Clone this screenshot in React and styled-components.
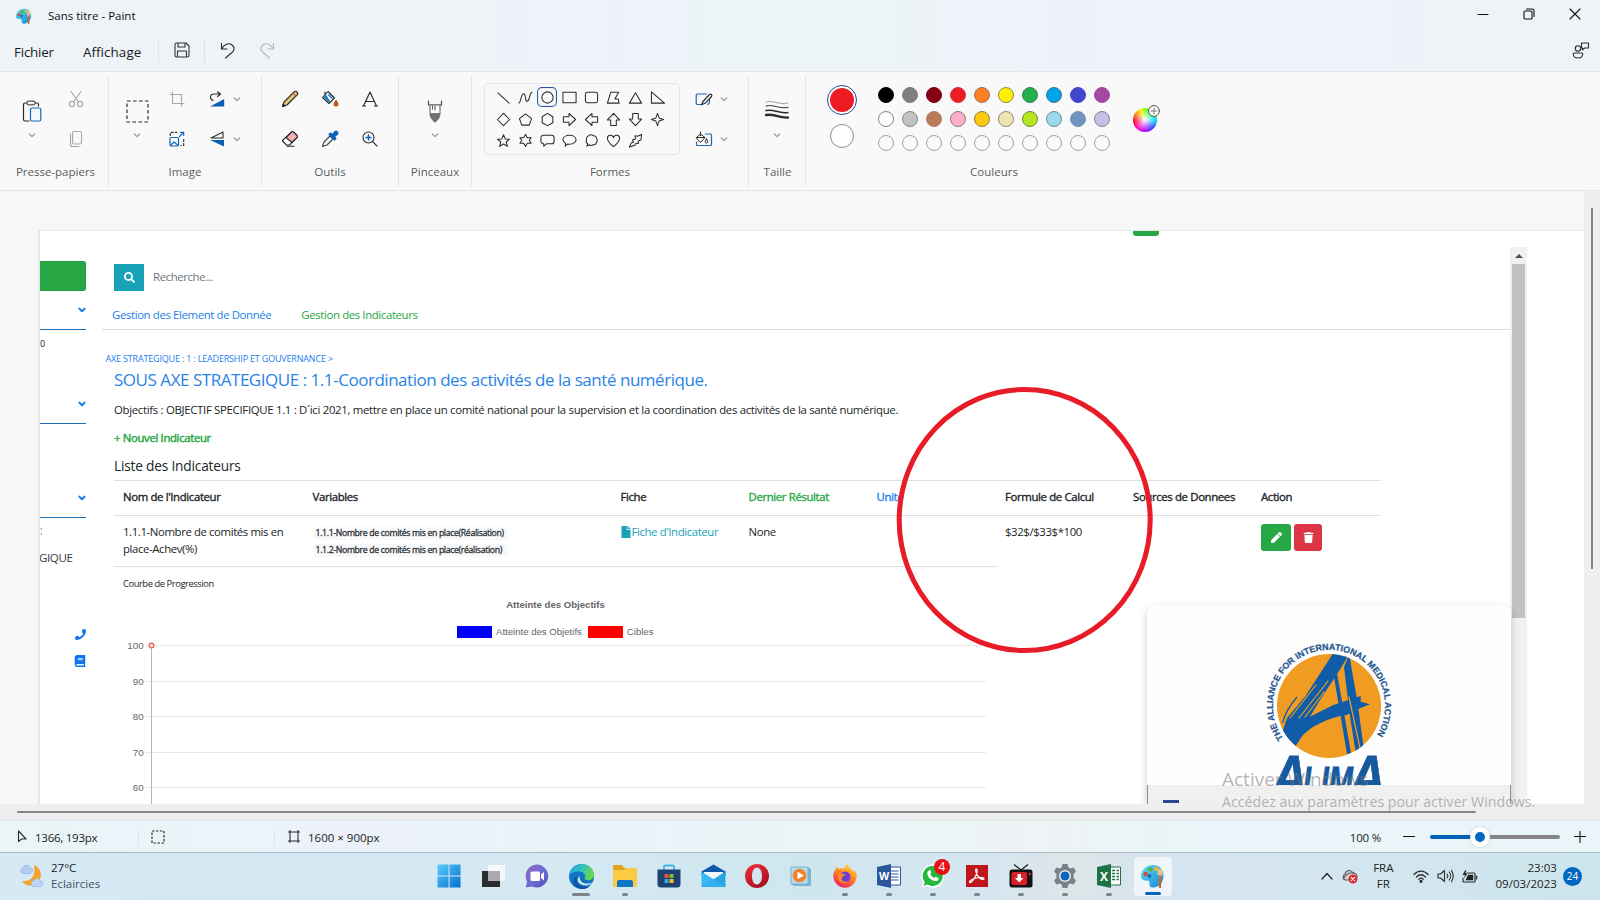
import React from 'react';
import styled, { createGlobalStyle } from 'styled-components';
import { FaSearch, FaPhone, FaBook, FaFile, FaPen, FaTrash } from 'react-icons/fa';

const Global = createGlobalStyle`
  * { box-sizing: border-box; }
  body { margin: 0; overflow: hidden; background: #f7f7f7; }
  svg { display: block; flex: none; }
`;

/* ---------- window shell ---------- */
const Window = styled.div`
  position: relative;
  width: 1600px;
  height: 900px;
  overflow: hidden;
  display: flex;
  flex-direction: column;
  font-family: "Open Sans", "Noto Sans", sans-serif;
  font-size: 11.5px;
  color: #1b1b1b;
  white-space: nowrap;
`;
const Header = styled.header`
  height: 72px;
  flex: none;
  border-bottom: 1px solid #e4e7ea;
  background: linear-gradient(90deg, #edf3f7 0%, #edf3f7 28%, #eef2fb 36%, #ecf4f7 46%, #ecf4f7 52%, #eef2fb 72%, #eef2fb 84%, #edf3f7 92%);
`;
const TitleBar = styled.div`
  height: 31px;
  display: flex;
  align-items: center;
  padding: 0 19px 0 16px;
`;
const Title = styled.span`
  margin: -1px 0 0 16px;
  flex: 1;
  color: #111;
`;
const WindowControls = styled.div`
  display: flex;
  align-items: center;
  gap: 34px;
  padding-bottom: 3px;
`;
const MenuBar = styled.div`
  height: 40px;
  display: flex;
  align-items: center;
  padding: 1px 10px 0 14px;
`;
const MenuItem = styled.span`
  font-size: 13.4px;
  letter-spacing: ${(p) => p.$track || '0.08px'};
  margin-right: ${(p) => p.$gap}px;
`;
const MenuDivider = styled.i`
  width: 1px;
  height: 23px;
  background: #dde2e6;
`;
const MenuTool = styled.span`
  display: flex;
  justify-content: center;
  width: ${(p) => p.$w}px;
  padding-bottom: 3px;
`;
const Feedback = styled.span`
  margin-left: auto;
  padding-bottom: 3px;
`;

/* ---------- ribbon ---------- */
const Ribbon = styled.div`
  height: 119px;
  flex: none;
  display: flex;
  padding: 4px 0;
  background: #f9f9f9;
  border-bottom: 1px solid #e6e6e6;
`;
const Group = styled.section`
  width: ${(p) => p.$w}px;
  border-right: ${(p) => (p.$last ? 0 : '1px solid #e5e5e5')};
  display: flex;
  flex-direction: column;
  padding-top: 3px;
`;
const GroupBody = styled.div`
  height: 80px;
  display: flex;
  justify-content: ${(p) => (p.$center ? 'center' : 'flex-start')};
  padding-left: ${(p) => p.$pad || 0}px;
`;
const GroupLabel = styled.div`
  height: 26px;
  line-height: 26px;
  text-align: center;
  padding-left: ${(p) => p.$pad || 0}px;
  color: #5c5c5c;
`;
const BigTool = styled.div`
  width: ${(p) => p.$w}px;
  flex: none;
  display: flex;
  flex-direction: column;
  align-items: center;
  justify-content: space-between;
  padding: 21px 0 21px;
`;
const ToolGrid = styled.div`
  display: grid;
  grid-template-columns: ${(p) => p.$cols};
  grid-template-rows: 40px 40px;
  align-items: center;
  justify-items: center;
`;
const SplitTool = styled.div`
  display: flex;
  align-items: center;
  gap: ${(p) => p.$gap}px;
`;
const ShapeBox = styled.div`
  width: 196px;
  height: 72px;
  margin: 4px 12px 0 0;
  border: 1px solid #e6e6e6;
  border-radius: 4px;
  padding: 2px 7px;
  display: grid;
  grid-template-columns: repeat(8, 22px);
  grid-template-rows: 22px 22px 21px;
`;
const ShapeCell = styled.span`
  display: flex;
  align-items: center;
  justify-content: center;
  border-radius: 5px;
  box-shadow: ${(p) => (p.$on ? 'inset 0 0 0 1px #2b559f, inset 0 0 0 2px #e8eef8' : 'none')};
  margin: 1px;
`;
const ActiveColors = styled.div`
  display: flex;
  flex-direction: column;
  align-items: center;
  gap: 9px;
  padding-top: 6px;
  margin-right: 21px;
`;
const Primary = styled.span`
  width: 30px;
  height: 30px;
  border-radius: 50%;
  border: 1px solid #1f4a91;
  padding: 2px;
  background: #fff;
  &::after {
    content: '';
    display: block;
    width: 24px;
    height: 24px;
    border-radius: 50%;
    background: #ed1c24;
  }
`;
const Secondary = styled.span`
  width: 24px;
  height: 24px;
  border-radius: 50%;
  border: 1px solid #8a8a8a;
  background: #fff;
`;
const Palette = styled.div`
  display: grid;
  grid-template-columns: repeat(10, 16px);
  grid-auto-rows: 16px;
  gap: 8px;
  padding-top: 8px;
  margin-right: 23px;
`;
const Swatch = styled.span`
  border-radius: 50%;
  background: ${(p) => p.$c};
  border: 1px solid ${(p) => p.$ring};
`;
const WheelWrap = styled.div`
  position: relative;
  width: 24px;
  height: 24px;
  margin-top: 29px;
  border-radius: 50%;
  background: radial-gradient(circle, #fff 0%, rgba(255, 255, 255, 0.6) 25%, transparent 68%),
    conic-gradient(#7dff00, #00ff6a 50deg, #00d5ff 90deg, #2a4bff 130deg, #a000ff 175deg, #ff00d0 220deg, #ff0030 265deg, #ff8a00 305deg, #ffee00 335deg, #7dff00);
`;
const WheelPlus = styled.span`
  position: absolute;
  left: 15px;
  top: -3px;
`;

/* ---------- work area ---------- */
const Workspace = styled.div`
  height: 613px;
  flex: none;
  display: flex;
  background: #f7f7f7;
`;
const CanvasHolder = styled.div`
  width: 1584px;
  padding: 39px 0 0 38px;
`;
const Canvas = styled.div`
  position: relative;
  height: 574px;
  width: 1546px;
  border-left: 2px solid #e6e6e6;
  border-top: 1px solid #e8e8e8;
  background: #fff;
  overflow: hidden;
  color: #212529;
`;
const VerticalTrack = styled.div`
  flex: 1;
  background: #efefef;
  padding: 17px 0 0 7px;
`;
const VerticalThumb = styled.div`
  width: 2px;
  height: 361px;
  background: #868686;
`;
const HorizontalTrack = styled.div`
  height: 16px;
  flex: none;
  background: #eee;
  padding: 7px 0 0 17px;
`;
const HorizontalThumb = styled.div`
  width: 1459px;
  height: 2px;
  border-radius: 1px;
  background: #868686;
`;

/* ---------- web page on the canvas ---------- */
const TopStrip = styled.div`
  height: 16px;
  padding-left: 1093px;
`;
const GreenStub = styled.div`
  width: 26px;
  height: 5px;
  background: #28a745;
  border-radius: 0 0 3px 3px;
`;
const PageRow = styled.div`
  display: flex;
  height: 557px;
`;
const SideNav = styled.aside`
  width: 46px;
  margin-right: 16px;
  padding-top: 14px;
  overflow: hidden;
`;
const SideButton = styled.div`
  height: 30px;
  background: #28a745;
  border: 1px solid #1f9a3c;
  border-left: 0;
  border-radius: 0 3px 3px 0;
`;
const SideSection = styled.div`
  height: ${(p) => p.$h}px;
  border-bottom: 1px solid #1b6fb8;
  display: flex;
  flex-direction: column;
  justify-content: space-between;
  padding-bottom: 16px;
`;
const SideText = styled.div`
  font-size: 9px;
  line-height: 12px;
  padding-top: 8px;
`;
const SideChevron = styled.span`
  align-self: flex-end;
  margin-top: auto;
`;
const SideFoot = styled.div`
  display: flex;
  flex-direction: column;
  color: #0f74f0;
`;
const SideCut = styled.div`
  height: 26px;
  width: 2px;
  overflow: hidden;
  font-size: 12px;
  line-height: 26px;
  color: #777;
`;
const SideWord = styled.div`
  height: 28px;
  line-height: 28px;
  font-size: 11.6px;
  letter-spacing: -0.4px;
  color: #333a40;
  margin-left: -1px;
`;
const SideIcon = styled.span`
  align-self: flex-end;
  margin-top: ${(p) => p.$top}px;
`;
const Main = styled.main`
  width: 1408px;
`;
const SearchBar = styled.div`
  display: flex;
  align-items: center;
  padding: 17px 0 0 12px;
  font-size: 11.4px;
  letter-spacing: -0.4px;
  line-height: 1;
  color: #6c757d;
`;
const SearchHint = styled.span`
  padding-bottom: 2px;
`;
const SearchButton = styled.span`
  width: 30px;
  height: 27px;
  margin-right: 9px;
  background: #17a2b8;
  color: #fff;
  display: flex;
  align-items: center;
  justify-content: center;
`;
const Tabs = styled.nav`
  height: 39px;
  border-bottom: 1px solid #dcdfe2;
  display: flex;
  gap: 30px;
  padding: 0 0 0 10px;
  line-height: 48px;
  font-size: 11.4px;
`;
const Tab = styled.span`
  letter-spacing: -0.38px;
  color: ${(p) => (p.$active ? '#28a745' : '#1b80e8')};
`;
const Crumb = styled.div`
  padding: 22px 0 0 3.5px;
  font-size: 9px;
  line-height: 14px;
  letter-spacing: -0.18px;
  color: #1b7df0;
`;
const Section = styled.div`
  padding-left: 12px;
`;
const Heading = styled.h1`
  margin: 0;
  font-size: 17px;
  font-weight: 400;
  line-height: 28px;
  letter-spacing: -0.465px;
  color: #2a84e6;
`;
const Goal = styled.p`
  margin: 0;
  font-size: 11.4px;
  line-height: 32px;
  letter-spacing: -0.315px;
`;
const AddLink = styled.div`
  font-size: 11.4px;
  line-height: 24px;
  letter-spacing: -0.36px;
  color: #28a745;
  -webkit-text-stroke: 0.45px #28a745;
`;
const ListTitle = styled.h2`
  margin: 0;
  font-size: 13.7px;
  font-weight: 400;
  line-height: 32px;
  height: 30px;
  letter-spacing: -0.19px;
`;
const TableRow = styled.div`
  display: grid;
  grid-template-columns: 189.5px 308px 128px 128px 128.5px 128px 128px 128px;
  width: 1267px;
  height: ${(p) => p.$h}px;
  border-top: 1px solid #dcdfe3;
  font-size: 11.4px;
`;
const HeadCell = styled.div`
  padding-left: 9px;
  line-height: 32px;
  letter-spacing: -0.37px;
  color: ${(p) => p.$c || '#212529'};
  -webkit-text-stroke: 0.35px ${(p) => p.$c || '#212529'};
`;
const Cell = styled.div`
  padding: 7px 0 0 9px;
  line-height: 17px;
  letter-spacing: -0.4px;
  color: ${(p) => p.$c || '#212529'};
`;
const FileLink = styled.span`
  display: flex;
  align-items: center;
  margin-left: -1px;
`;
const Variables = styled.div`
  padding-top: 4px;
`;
const Variable = styled.div`
  width: 195px;
  height: 13px;
  margin-bottom: 4px;
  line-height: 12.5px;
  padding-left: 3px;
  border-radius: 3px;
  background: #f8f9fa;
  font-size: 8.7px;
  letter-spacing: -0.33px;
  color: #2c3136;
  -webkit-text-stroke: 0.3px #2c3136;
`;
const Buttons = styled.div`
  display: flex;
  gap: 3px;
  padding-top: 1px;
`;
const IconButton = styled.span`
  width: ${(p) => p.$w}px;
  height: 27px;
  border-radius: 3px;
  background: ${(p) => p.$bg};
  color: #fff;
  display: flex;
  align-items: center;
  justify-content: center;
`;
const ChartBlock = styled.div`
  width: 883px;
  border-top: 1px solid #dcdfe3;
  padding-top: 8px;
`;
const ChartCaption = styled.div`
  padding-left: 9px;
  font-size: 9.3px;
  line-height: 17px;
  letter-spacing: -0.4px;
`;
const ChartTitle = styled.div`
  font: 700 9.6px/24px "Liberation Sans", Arial, sans-serif;
  color: #666;
  text-align: center;
  padding-top: 1px;
`;
const Legend = styled.div`
  display: flex;
  justify-content: center;
  align-items: center;
  height: 21px;
  padding-top: 9px;
  font: 9.6px/12px "Liberation Sans", Arial, sans-serif;
  color: #666;
`;
const LegendKey = styled.i`
  width: 35px;
  height: 12px;
  margin: 0 3.5px 0 ${(p) => p.$ml || 0}px;
  background: ${(p) => p.$c};
`;
const PageScroll = styled.div`
  width: 17px;
  background: #f1f1f1;
  display: flex;
  flex-direction: column;
  align-items: center;
`;
const ScrollArrow = styled.i`
  margin: 7px 0 6px;
  border: 4px solid transparent;
  border-top: 0;
  border-bottom-color: #505050;
`;
const ScrollThumb = styled.i`
  width: 13px;
  height: 354px;
  background: #c1c1c1;
`;
const LogoCard = styled.div`
  position: absolute;
  left: 1107px;
  top: 374px;
  width: 364px;
  height: 199px;
  border-radius: 8px 8px 0 0;
  background: #fefefe;
  box-shadow: 0 3px 9px rgba(0, 0, 0, 0.2);
  display: flex;
  flex-direction: column;
`;
const CardFooter = styled.div`
  height: 19px;
  background: #f0f0f0;
  border: 1px solid #8e8e8e;
  border-width: 0 1px;
  padding: 15px 0 0 15px;
`;
const FooterMark = styled.i`
  display: block;
  width: 16px;
  height: 3px;
  background: #2a4a8c;
`;
const Annotation = styled.svg`
  position: absolute;
  left: 856px;
  top: 154px;
`;
const Watermark = styled.div`
  position: absolute;
  left: 1222px;
  top: 766px;
  color: rgba(120, 120, 120, 0.55);
  font-size: 14.2px;
  line-height: 20px;
`;
const WatermarkTitle = styled.div`
  font-size: 19px;
  line-height: 26px;
`;

/* ---------- status bar ---------- */
const StatusBar = styled.footer`
  height: 32px;
  flex: none;
  display: flex;
  align-items: center;
  border-top: 1px solid #e3e6e8;
  background: linear-gradient(90deg, #eaf5f7 0%, #edf2fa 22%, #ebf3f9 36%, #eaf5f7 52%, #eef3f5 65%, #e9f5f8 75%, #e9f5f9 100%);
`;
const StatusCell = styled.div`
  display: flex;
  align-items: center;
  width: ${(p) => p.$w}px;
  height: 16px;
  padding-left: ${(p) => p.$pad}px;
  gap: ${(p) => p.$gap || 0}px;
  letter-spacing: ${(p) => p.$track || 0}px;
  border-right: 1px solid ${(p) => (p.$line ? '#dbe4e7' : 'transparent')};
`;
const StatusText = styled.span`
  padding-top: 2px;
`;
const ZoomArea = styled.div`
  margin-left: auto;
  display: flex;
  align-items: center;
  padding: 1px 14px 0 0;
`;
const ZoomValue = styled.span`
  letter-spacing: -0.2px;
  margin-right: 22px;
  padding-top: 1px;
`;
const Track = styled.div`
  width: 130px;
  height: 4px;
  margin: 0 14px 0 15px;
  border-radius: 2px;
  display: flex;
  align-items: center;
  background: linear-gradient(90deg, #005fb8 50px, #868686 50px);
  padding-left: 40px;
`;
const Knob = styled.i`
  width: 20px;
  height: 20px;
  border-radius: 50%;
  border: 5px solid #fff;
  background: #0067c0;
  box-shadow: 0 0 1px 1px rgba(0, 0, 0, 0.08);
`;

/* ---------- taskbar ---------- */
const Taskbar = styled.div`
  height: 48px;
  flex: none;
  display: flex;
  align-items: center;
  border-top: 1px solid #a3bac3;
  background: linear-gradient(90deg, #d6eaf5 0%, #d3e8f3 20%, #d5e9f3 35%, #cfe6ee 50%, #d6e6f0 62%, #dde5e8 67%, #d6e4ef 72%, #d3e6f0 84%, #cde5ee 100%);
`;
const Weather = styled.div`
  width: 427px;
  display: flex;
  align-items: center;
  gap: 7px;
  padding: 0 0 2px 19px;
`;
const Lines = styled.div`
  line-height: 16px;
  text-align: ${(p) => p.$align || 'left'};
  letter-spacing: ${(p) => p.$track || 0}px;
  margin-right: ${(p) => p.$mr || 0}px;
`;
const Muted = styled.div`
  color: #44545c;
`;
const AppButton = styled.div`
  position: relative;
  width: ${(p) => (p.$on ? 38 : 44)}px;
  height: ${(p) => (p.$on ? 39 : 47)}px;
  margin: 0 ${(p) => (p.$on ? 3 : 0)}px;
  padding-bottom: 1px;
  border-radius: 4px;
  background: ${(p) => (p.$on ? 'rgba(255,255,255,.62)' : 'transparent')};
  display: flex;
  align-items: center;
  justify-content: center;
`;
const Indicator = styled.i`
  position: absolute;
  bottom: ${(p) => (p.$on ? 1 : 4)}px;
  width: ${(p) => p.$w}px;
  height: 3px;
  border-radius: 2px;
  background: ${(p) => (p.$on ? '#0067c0' : '#7c8589')};
`;
const AppBadge = styled.span`
  position: absolute;
  right: 5px;
  top: 6px;
  width: 16px;
  height: 16px;
  border-radius: 50%;
  background: #ea0f16;
  color: #fff;
  text-align: center;
  line-height: 16px;
  font-size: 12px;
`;
const Tray = styled.div`
  margin-left: auto;
  display: flex;
  align-items: center;
  padding: 0 18px 1px 0;
`;
const TrayIcon = styled.span`
  margin-right: ${(p) => p.$mr}px;
`;
const CountBadge = styled.span`
  width: 19px;
  height: 19px;
  border-radius: 50%;
  background: #0067c0;
  color: #fff;
  font-size: 10px;
  line-height: 19px;
  text-align: center;
`;

/* ---------- drawings ---------- */
const Svg = ({ w = 16, h = w, box, children, stroke = '#2b2b2b', sw = 1.1, ...rest }) => (
  <svg width={w} height={h} viewBox={box || `0 0 ${w} ${h}`} fill="none" stroke={stroke} strokeWidth={sw} strokeLinecap="round" strokeLinejoin="round" {...rest}>
    {children}
  </svg>
);
const Chevron = () => (
  <Svg w={8} h={5} stroke="#9a9a9a" sw={1.2}><path d="M1.3 1 4 3.7 6.7 1" /></Svg>
);
const BlueChevron = () => (
  <Svg w={8} h={6} stroke="#1478e8" sw={2}><path d="M1.4 1.6 4 4.2 6.6 1.6" /></Svg>
);
const PaintLogo = ({ size = 16 }) => (
  <svg width={size} height={size} viewBox="0 0 24 24">
    <defs>
      <linearGradient id="pl" x1="0" y1="0" x2="1" y2="1">
        <stop offset="0" stopColor="#5fdcf2" /><stop offset="1" stopColor="#0f86d6" />
      </linearGradient>
    </defs>
    <path d="M12 1C5 1 0 6.500 0 12c0 3 2 5 5 4.500s4 1 3.500 3.500S9.500 24 13 23.500C19 22.500 23 17 22.500 11S18 1 12 1z" fill="url(#pl)" />
    <circle cx="9" cy="5.500" r="2.200" fill="#59b336" /><circle cx="4.500" cy="10" r="2.200" fill="#d8472b" />
    <circle cx="15" cy="5" r="2.200" fill="#f2b733" /><circle cx="8.500" cy="12" r="1.900" fill="#1d62b5" />
    <path d="M16.500 8c0-2 1-3.500 2.500-3.500S21.500 6 21.500 8v4h-5z" fill="#e8c38a" />
    <path d="M16.500 11h5v2.500h-5z" fill="#8b949b" /><path d="M17.500 13.500h3L20 24h-2z" fill="#c5682a" />
  </svg>
);

const shapes = [
  <path d="M2 3 14 14" />,
  <path d="M1 14C3 14 3 4 6 4s1 9 4 8S12 3 15 2.500" />,
  <circle cx="8" cy="8" r="6" />,
  <path d="M1 2.500h14v11H1z" />,
  <rect x="1.500" y="2.500" width="13" height="11" rx="2" />,
  <path d="M1.500 14 5 2.500h8.500L9.500 9.500H13L14 14z" />,
  <path d="M8 3 14.500 14h-13z" />,
  <path d="M1.500 2v12h14z" />,
  <path d="M8 1.500 14.500 8 8 14.500 1.500 8z" />,
  <path d="M8 2 14.500 7 12 14H4L1.500 7z" />,
  <path d="M8 1.500 13.700 5v6.500L8 14.500 2.300 11.500V5z" />,
  <path d="M1.500 5h6V1.500L14.500 8 7.500 14.500V11h-6z" />,
  <path d="M14.500 5h-6V1.500L1.500 8l7 6.500V11h6z" />,
  <path d="M5 14.500v-6H1.500L8 1.500l6.500 7H11v6z" />,
  <path d="M5 1.500v6H1.500L8 14.500l6.500-7H11v-6z" />,
  <path d="M8 1.500 9.700 6.300 14.500 8 9.700 9.700 8 14.500 6.300 9.700 1.500 8l4.800-1.700z" />,
  <path d="M8 1.800 9.800 6.300l4.700.3-3.600 3 1.200 4.700L8 11.700l-4.100 2.600 1.200-4.700-3.600-3 4.700-.3z" />,
  <path d="M8 1.500 10 5h4l-2 3 2 3h-4l-2 3.500L6 11H2l2-3-2-3h4z" />,
  <path d="M3.500 2.500h9A2.500 2.500 0 0 1 15 5v4a2.500 2.500 0 0 1-2.500 2.500H7L4 14v-2.500A2.700 2.700 0 0 1 1 9V5a2.500 2.500 0 0 1 2.500-2.500z" />,
  <path d="M8 2.500c4 0 7 2 7 4.700S12 12 8 12c-1 0-1.500 0-2.200-.2L3.500 14l.3-3C2 10 1 8.700 1 7.200 1 4.500 4 2.500 8 2.500z" />,
  <path d="M5 3c1-1.500 4-1.500 5 0 2-.2 3.500 1 3.200 3 1.300 1 1.300 3 0 4-.2 2-1.700 3-3.500 2.500-1 1-3 1-4 0L3 14l1-2.500C2.500 11 2 9.500 2.700 8.200 2 6 3 3.500 5 3z" />,
  <path d="M8 14.500C3 10.500 1.500 8 1.500 5.500 1.500 1.500 7 1.300 8 5c1-3.700 6.500-3.500 6.500.5C14.500 8 13 10.500 8 14.500z" />,
  <path d="M7.500 3 10 3.500 14.500 1.500 13.800 7.500l-3 1 .5 2.300-3.300.7L7.500 13l-6 2 2-4.500 2.500-.7L4.700 7.500 8 6.300z" />,
];

const palette = [
  ['#000000', '#000'], ['#7f7f7f', '#7f7f7f'], ['#880015', '#740012'], ['#ed1c24', '#dd2c32'], ['#ff7f27', '#9a7455'],
  ['#fff200', '#8d8950'], ['#22b14c', '#3d7b50'], ['#00a2e8', '#3b7792'], ['#3f48cc', '#3f48cc'], ['#a349a4', '#a349a4'],
  ['#ffffff', '#858585'], ['#c3c3c3', '#858585'], ['#b97a57', '#b97a57'], ['#ffaec9', '#94757f'], ['#ffc90e', '#94803e'],
  ['#efe4b0', '#8e8a74'], ['#b5e61d', '#74873f'], ['#99d9ea', '#6f8a91'], ['#7092be', '#7092be'], ['#c8bfe7', '#838091'],
  ...Array(10).fill(['#fafafa', '#a2a2a2']),
];

const PasteIcon = () => (
  <Svg w={20} h={22} sw={1.2}>
    <path d="M5 3H3a1.500 1.500 0 0 0-1.500 1.500v15A1.500 1.500 0 0 0 3 21h4M13 3h2a1.500 1.500 0 0 1 1.500 1.500V6" />
    <rect x="5" y="1.200" width="8" height="3.600" rx="1.500" stroke="#555" />
    <rect x="8.500" y="8" width="10.300" height="13" rx="1.500" stroke="#1469bd" fill="#f3f8fd" />
  </Svg>
);
const ScissorsIcon = () => (
  <Svg w={16} h={18} stroke="#a8a8a8"><path d="M3 1.500 10.500 12M13 1.500 5.500 12" /><circle cx="4" cy="14" r="2.600" /><circle cx="12" cy="14" r="2.600" /></Svg>
);
const CopyIcon = () => (
  <Svg w={14} h={18} stroke="#a8a8a8"><rect x="3.500" y="1.500" width="9" height="12.500" rx="1.500" /><path d="M1.500 4v10.500a2 2 0 0 0 2 2H10" /></Svg>
);
const SelectIcon = ({ s = 23, d = '3.600 2.400' }) => (
  <Svg w={s} sw={1.2} strokeDasharray={d}><rect x="1" y="1" width={s - 2} height={s - 2} strokeLinecap="butt" /></Svg>
);
const CropIcon = () => (
  <Svg w={16} stroke="#a8a8a8"><path d="M3.500 1v11.500H15M1 3.500h11.500V15" /></Svg>
);
const ResizeIcon = () => (
  <Svg w={16} sw={1.2}>
    <path d="M1.200 4.500V1.300h6.500M14.700 8.500v6h-3" strokeDasharray="2 2.200" />
    <rect x="1" y="6.500" width="8.500" height="8.500" rx="1" stroke="#1469bd" /><path d="m2 14 3-3 3.500 3M10.500 5.500l4-4M11.500 1.300h3.200v3.200" stroke="#1469bd" />
  </Svg>
);
const RotateIcon = () => (
  <Svg w={16}><path d="M15.200 8v7.500H1z" fill="#0c5fb3" stroke="none" /><path d="M4 9.500C0 7.500 1 3 5 3h6M8.500.8 11.500 3 8.500 5.500" /></Svg>
);
const FlipIcon = () => (
  <Svg w={16}><path d="M14 1v6H2z" /><path d="M1 9h14v6.500z" fill="#0c5fb3" stroke="none" /></Svg>
);
const PencilIcon = () => (
  <Svg w={18}><path d="M1.500 16.500 3 12 13 2a2 2 0 0 1 3 3L6 15z" fill="#e6c878" /><path d="M1.500 16.500 2.300 14l1.700 1.800z" fill="#222" /><path d="M12 3l3 3" stroke="#b85450" /></Svg>
);
const BucketIcon = () => (
  <Svg w={18}><path d="M4 2v5" /><path d="M7 1.500 13.500 8 8 13.500 1.500 7.500z" fill="#fff" /><path d="M5 4.500 2.500 7.300l5.500 5.200 1.300-1.300zM8 4l4 4-1 1.200L6.800 5z" fill="#2277c9" stroke="none" /><path d="M15 10.500c2.500 3.300 2.300 5.500 0 5.500s-2.500-2.200 0-5.500z" fill="#d4622c" stroke="#a84417" /></Svg>
);
const LetterIcon = () => (
  <Svg w={16} sw={1.2}><path d="M1.500 15 8 1l6.500 14M4 10.500h8M0.500 15h3M12.500 15h3" /></Svg>
);
const EraserIcon = () => (
  <Svg w={18}><path d="M1.500 10.500 10.500 2a1.500 1.500 0 0 1 2 0l3.500 3.500a1.500 1.500 0 0 1 0 2L8.500 15h-3l-4-4z" fill="#fff" /><path d="m5 7.500 5.700-5.300a1.500 1.500 0 0 1 2 0L16 5.500a1.500 1.500 0 0 1 0 2L11 12.500z" fill="#f5aeb3" /><path d="M6 16.300h7" /></Svg>
);
const DropperIcon = () => (
  <Svg w={18}><path d="M1.500 16.500 3 12l6-6 3 3-6 6z" fill="#f2f5f9" stroke="#444" /><path d="M8 4.500 9.500 3l2 1.500 2-2.700c2-2 4.500.5 2.700 2.700l-2.700 2L15 8.500 13.500 10z" fill="#0c63bb" stroke="#0c63bb" /></Svg>
);
const ZoomIcon = () => (
  <Svg w={16}><circle cx="6.500" cy="6.500" r="5.500" /><path d="M10.700 10.700 15 15" /><path d="M6.500 4v5M4 6.500h5" stroke="#0c63bb" strokeWidth="1.500" /></Svg>
);
const BrushIcon = () => (
  <Svg w={16} h={23}><path d="M1.500 1v4h13V1" stroke="#444" /><path d="M3 5v8c0 4 2.500 7 5 9 2.500-2 5-5 5-9V5z" fill="#fff" stroke="#666" /><path d="M3 13h10c0 4-2.500 7-5 9-2.500-2-5-5-5-9z" fill="#737373" stroke="none" /><path d="M5.500 6v3M8 6v4" stroke="#555" /></Svg>
);
const OutlineIcon = () => (
  <Svg w={18} h={16} sw={1.2}><path d="M11.500 3H2.500A1.300 1.300 0 0 0 1.200 4.300v8A1.300 1.300 0 0 0 2.500 13.500H6M14.500 8v3c0 1-.5 2-2 2.300" stroke="#1469bd" /><path d="M6.500 13.800 8 10.500 14.500 3.500c1.500-1 3 .5 2 2L10 12.300z" fill="#fff" /></Svg>
);
const FillIcon = () => (
  <Svg w={18} h={16} sw={1}><path d="M10.500 3h5a1 1 0 0 1 1 1v9.500a1 1 0 0 1-1 1h-13a1 1 0 0 1-1-1V11" stroke="#1469bd" strokeWidth="1.200" /><path d="M5.500 1v3.500M1.500 6.500 5.500 3l4.500 3.500-4 4.500H5zM2 6.500h7.500" /><path d="M11.500 8c1.700 2.300 1.700 4 0 4s-1.700-1.700 0-4z" fill="#fff" /></Svg>
);
const StrokeSizeIcon = () => (
  <Svg w={24} h={20}><path d="M1 2c8-2 12 3 22 1" strokeWidth="0.800" stroke="#888" /><path d="M1 6c8-2 12 3 22 1.500" strokeWidth="1" /><path d="M1 10.500c8-2 12 3.500 22 2" strokeWidth="1.500" /><path d="M1 15c8-1.500 12 3 22 2.500" strokeWidth="2.300" /></Svg>
);

const Chart = () => (
  <svg width="883" height="166" viewBox="0 0 883 166" fontFamily='"Liberation Sans", Arial, sans-serif' fontSize="9.8" fill="#666">
    {[100, 90, 80, 70, 60].map((v, i) => {
      const y = 7.5 + Math.round(i * 35.5);
      return (
        <g key={v}>
          <line x1="31" x2="872" y1={y} y2={y} stroke="#e8e8e8" />
          <text x="29.700" y={y + 3} textAnchor="end">{v}</text>
        </g>
      );
    })}
    <line x1="37.500" x2="37.500" y1="7" y2="166" stroke="#b4b4b4" />
    <circle cx="37.500" cy="7.500" r="2.400" fill="#fbe0e0" stroke="#f05a5a" strokeWidth="1.200" />
  </svg>
);

const AlimaLogo = () => (
  <svg width="364" height="180" viewBox="0 0 364 180">
    <defs>
      <path id="ring" d="M136.500 133.500A56 56 0 1 1 227.500 133.500" />
      <clipPath id="disc"><circle cx="182" cy="101" r="52" /></clipPath>
    </defs>
    <circle cx="182" cy="101" r="52" fill="#f09c22" />
    <g clipPath="url(#disc)" fill="#0f5ca8">
      <path d="M186.300 48H203L192 66 173 95 163 111.700 186.300 100 213.700 91V96.700L223 99.300 213 103.300 199.700 110C190 111 182 114 173 118.300 165 122 160 126 154.700 131.700L148 142 135 128 140 113 158 91.700z" />
      <path d="M186.500 69 190 68 204 148 200 149z" />
      <path d="M197 62 202.300 49 205 66 209.700 91.700 217 145 209 149 203 111.700z" />
    </g>
    <g fill="none" stroke="#f09c22" strokeWidth="1.200" clipPath="url(#disc)" strokeLinecap="round">
      <path d="M181 76 152 113M177 87 158 112M169 80 143 113M202 92 213 143" />
    </g>
    <path d="M150 92C144 99 138 108 135.500 118" stroke="#0f5ca8" strokeWidth="1.300" fill="none" />
    <text fill="#27568f" stroke="#27568f" strokeWidth="0.250" fontFamily='"Liberation Sans", sans-serif' fontWeight="700" fontSize="8.800">
      <textPath href="#ring" textLength="241" lengthAdjust="spacingAndGlyphs">THE ALLIANCE FOR INTERNATIONAL MEDICAL ACTION</textPath>
    </text>
    <g fill="#155a9f" stroke="#155a9f" strokeWidth="0.800" fontFamily='"Liberation Sans", sans-serif' fontWeight="700" fontStyle="italic">
      <text x="124" y="193" fontSize="61" textLength="37" lengthAdjust="spacingAndGlyphs">A</text>
      <text x="156" y="190" fontSize="41" textLength="50" lengthAdjust="spacingAndGlyphs">LIM</text>
      <text x="202" y="193" fontSize="61" textLength="37" lengthAdjust="spacingAndGlyphs">A</text>
    </g>
  </svg>
);

const appIcons = {
  start: (
    <svg width="24" height="24" viewBox="0 0 24 24"><defs><linearGradient id="st" x1="0" y1="0" x2="1" y2="1"><stop offset="0" stopColor="#55cdfb" /><stop offset="1" stopColor="#0870ce" /></linearGradient></defs><path d="M.5.500h11v11H.5zM12.500.500h11v11h-11zM.5 12.500h11v11H.5zM12.500 12.500h11v11h-11z" fill="url(#st)" /></svg>
  ),
  tasks: (
    <svg width="24" height="24" viewBox="0 0 24 24"><path d="M1 7h18v16H1z" fill="#2a2c2e" /><path d="M7 1h17v16H7z" fill="#f8f8f8" opacity=".95" /><path d="M7 7h12v10H7z" fill="#a9abac" /></svg>
  ),
  teams: (
    <svg width="24" height="24" viewBox="0 0 24 24"><defs><linearGradient id="tm" x1="0" y1="0" x2="1" y2="1"><stop offset="0" stopColor="#9a63b8" /><stop offset=".5" stopColor="#6b6fd6" /><stop offset="1" stopColor="#5050b5" /></linearGradient></defs><path d="M12 .5a11.500 11.500 0 1 1-5 22L.8 23.500 2 17.500A11.500 11.500 0 0 1 12 .5z" fill="url(#tm)" /><rect x="5.500" y="7.500" width="9.500" height="9.500" rx="1.500" fill="#fff" /><path d="M16 10.500 19 8v8.500L16 14z" fill="#fff" /></svg>
  ),
  edge: (
    <svg width="25" height="25" viewBox="0 0 24 24"><defs><linearGradient id="ea" x1="0" y1="0" x2="1" y2=".3"><stop offset="0" stopColor="#1e9fe3" /><stop offset=".6" stopColor="#35c5b5" /><stop offset="1" stopColor="#62d84e" /></linearGradient></defs><circle cx="12" cy="12" r="12" fill="#1272c4" /><path d="M.3 10.500C1.500 4 6.500 0 12.500 0 19 0 24 5 24 10c0 4-3 5.500-6 5.500s-3.500-1.500-2.500-3C16.500 8 8 4.500.3 10.500z" fill="url(#ea)" /><path d="M8 12c-3 7 4 12.500 12 9C15 26 7.500 24 5 19.500 3.500 16 5 12.500 8 12z" fill="#10539b" /><path d="M10.500 11.500c-1.500 5 4 9.500 12.500 6-2 1.500-3 2-3.500 2.500-3 1-6 .5-8-.5-4-2-4-6-1-8z" fill="#d4e9f1" /></svg>
  ),
  files: (
    <svg width="26" height="24" viewBox="0 0 26 24"><path d="M1 3a2 2 0 0 1 2-2h7l2 3h12a1 1 0 0 1 1 1v16H1z" fill="#e2a21c" /><path d="M1 6h11l2-2h10a1 1 0 0 1 1 1v16a2 2 0 0 1-2 2H1z" fill="#fccb45" /><path d="M5 18a2 2 0 0 1 2-2h12a2 2 0 0 1 2 2v5H5z" fill="#1375c6" /></svg>
  ),
  store: (
    <svg width="24" height="24" viewBox="0 0 24 24"><path d="M7 6V3a1.500 1.500 0 0 1 1.500-1.500h7A1.500 1.500 0 0 1 17 3v3" fill="none" stroke="#3fb4e8" strokeWidth="1.800" /><path d="M.5 5.500h23V20a3.500 3.500 0 0 1-3.500 3.500H4A3.500 3.500 0 0 1 .5 20z" fill="#1d4272" /><path d="M7.500 10h4v4h-4z" fill="#ef5125" /><path d="M12.500 10h4v4h-4z" fill="#7fba2e" /><path d="M7.500 15h4v4h-4z" fill="#35a8e8" /><path d="M12.500 15h4v4h-4z" fill="#fdb928" /></svg>
  ),
  mail: (
    <svg width="25" height="24" viewBox="0 0 25 24"><path d="M.5 7.500 12.500.500l12 7v4H.5z" fill="#0d59a8" /><path d="M3 8h19v8H3z" fill="#f3f7fa" /><path d="M.5 7.500 24.500 23H.5z" fill="#38b8f0" /><path d="M24.500 7.500v15.500H.5z" fill="#2aa3e4" /><path d="m.5 23 12-7.700L24.500 23z" fill="#31b0ee" /></svg>
  ),
  opera: (
    <svg width="24" height="24" viewBox="0 0 24 24"><defs><linearGradient id="op" x1="0" y1="0" x2=".6" y2="1"><stop offset="0" stopColor="#f5333f" /><stop offset="1" stopColor="#a80f1b" /></linearGradient></defs><path fillRule="evenodd" d="M12 0a12 12 0 1 0 0 24A12 12 0 0 0 12 0zm0 3.500c3 0 5 4 5 8.500s-2 8.500-5 8.500S7 17 7 12s2-8.500 5-8.500z" fill="url(#op)" /></svg>
  ),
  media: (
    <svg width="22" height="22" viewBox="0 0 22 22"><path d="M1 2h17v17H1z" fill="#b9dcec" stroke="#7fb1c8" /><path d="M18 2l3 2v17l-3-2zM4 21h17l-3-2H1z" fill="#7fb4cf" /><circle cx="9.500" cy="10.500" r="6.800" fill="#ee8329" /><path d="M7.500 6.700 14 10.500 7.500 14.300z" fill="#fff" /></svg>
  ),
  firefox: (
    <svg width="24" height="24" viewBox="0 0 24 24"><defs><linearGradient id="fx" x1=".8" y1="0" x2=".3" y2="1"><stop offset="0" stopColor="#ffe14a" /><stop offset=".45" stopColor="#ff8a20" /><stop offset="1" stopColor="#f2205f" /></linearGradient></defs><path d="M3 5c0-1 .5-2 1-2.500.3 1.300 1 2 2 2.500 2-.8 4-1 5.500-.5C12 2 13 .8 15 0c0 3 3.500 4.500 5.500 7.500C22 6.500 21.500 6 21.500 6 23.500 9 24 11 23.500 14A11.700 11.700 0 0 1 .3 13C0 10 1 7 3 5z" fill="url(#fx)" /><circle cx="12" cy="13" r="5.500" fill="#6a3fd0" /><path d="M5 10c2.500-2 4.500.5 7.500 0-.5 2-3.500 2-3.500 4-1.500 3 3 4.500 6 3-3 4-10 2-10-4z" fill="#fd8a25" /></svg>
  ),
  word: (
    <svg width="24" height="24" viewBox="0 0 24 24"><path d="M12 3h11.500v18H12z" fill="#fff" stroke="#2b579a" /><path d="M14 7h7.500M14 10h7.500M14 13h7.500M14 16h7.500" stroke="#2b579a" /><path d="M0 3 14 0v24L0 21z" fill="#2b579a" /><text x="7" y="16" fontSize="10.500" fontWeight="700" fontFamily="Open Sans" fill="#fff" textAnchor="middle">W</text></svg>
  ),
  whatsapp: (
    <svg width="24" height="24" viewBox="0 0 24 24"><path d="M12 .5A11.500 11.500 0 1 1 6 22L.5 23.500 2 18A11.500 11.500 0 0 1 12 .5z" fill="#fff" /><path d="M12 2A10 10 0 1 1 6.500 20.500L2.500 21.700 3.700 18A10 10 0 0 1 12 2z" fill="#25b83f" /><path d="M8 6.500c1-.8 1.500-.3 2 1.200.5 1.300 0 1.500-.6 2.300.6 1.800 2 3.200 4 4 1-.7 1-1.500 2-1 2.500 1 2.500 1.300 2 2.500-.8 1.700-3 2-5.500 1C8.500 15 6 11.500 6.300 9c.2-1.200.8-2 1.700-2.500z" fill="#fff" /></svg>
  ),
  acrobat: (
    <svg width="22" height="22" viewBox="0 0 22 22"><path d="M0 0h22v22H0z" fill="#c0151b" /><path d="M3.500 17c1-3 10-6 14-4 2 1.500-2 2.500-5-1S9 3.500 10.500 4s.5 5-2 9-4.500 5.500-5 4z" fill="none" stroke="#fff" strokeWidth="1.200" /></svg>
  ),
  tv: (
    <svg width="24" height="25" viewBox="0 0 24 25"><path d="m5 .5 7 5.500 7-5.500" fill="none" stroke="#1a1a1a" strokeWidth="1.200" /><rect x=".5" y="5.500" width="23" height="18" rx="2.500" fill="#171212" /><rect x="2.500" y="8" width="15.500" height="13" rx="2" fill="#d92027" /><path d="M8.500 10h3.500v4h2.500l-4.250 4.500L6 14h2.500z" fill="#fff" /><circle cx="20.700" cy="10" r="1.200" fill="#c33" /></svg>
  ),
  settings: (
    <svg width="24" height="24" viewBox="0 0 24 24"><path d="m9.500 0h5l.8 3.300 2 1.100 3.300-1 2.400 4.200-2.400 2.400v4l2.400 2.400-2.400 4.200-3.300-1-2 1.100-.8 3.300h-5l-.8-3.300-2-1.100-3.300 1L1 16.400 3.400 14v-4L1 7.600l2.400-4.200 3.300 1 2-1.100z" fill="#7a8087" /><circle cx="12" cy="12" r="6" fill="#e9edf0" /><circle cx="12" cy="12" r="4.500" fill="#0d66bd" /></svg>
  ),
  excel: (
    <svg width="24" height="24" viewBox="0 0 24 24"><path d="M12 3h11.500v18H12z" fill="#fff" stroke="#217346" /><path d="M15 6.500h3M19.500 6.500h2.500M15 9.500h3M19.500 9.500h2.500M15 12.500h3M19.500 12.500h2.500M15 15.500h3M19.500 15.500h2.500" stroke="#217346" strokeWidth="1.600" /><path d="M0 3 14 0v24L0 21z" fill="#1d7344" /><text x="7" y="16.500" fontSize="12" fontWeight="700" fontFamily="Open Sans" fill="#fff" textAnchor="middle">X</text></svg>
  ),
  paint: <PaintLogo size={24} />,
};
const apps = [
  ['start', 0], ['tasks', 0], ['teams', 0], ['edge', 18], ['files', 6], ['store', 0], ['mail', 0], ['opera', 0], ['media', 0],
  ['firefox', 6], ['word', 6], ['whatsapp', 6], ['acrobat', 6], ['tv', 6], ['settings', 6], ['excel', 6], ['paint', 16],
];

const WeatherIcon = () => (
  <svg width="25" height="24" viewBox="0 0 25 24"><path d="M15 1c8 3 9 13 3 18-5 4.500-12 3-15-2 10 1 14-6 12-16z" fill="#f5a32c" /><path d="M3.500 9.500a3 3 0 0 1 0-5.500 4.500 4.500 0 0 1 8-.5 3.200 3.200 0 0 1 0 6z" fill="#b4cdf3" stroke="#8fb0e4" strokeWidth=".7" /><path d="M14 22.500a2.800 2.800 0 0 1 0-5.300 4.200 4.200 0 0 1 7.500-.4 3 3 0 0 1 .5 5.700z" fill="#c0d5f5" stroke="#98b6e6" strokeWidth=".7" /></svg>
);

const headers = [
  ["Nom de l'Indicateur"], ['Variables'], ['Fiche'], ['Dernier Résultat', '#28a745'], ['Unité', '#1b80f0'],
  ['Formule de Calcul'], ['Sources de Donnees'], ['Action'],
];

const RibbonBar = () => (
  <Ribbon>
    <Group $w={109}>
      <GroupBody>
        <BigTool $w={64}><PasteIcon /><Chevron /></BigTool>
        <ToolGrid $cols="24px"><ScissorsIcon /><CopyIcon /></ToolGrid>
      </GroupBody>
      <GroupLabel $pad={3}>Presse-papiers</GroupLabel>
    </Group>
    <Group $w={153}>
      <GroupBody>
        <BigTool $w={56}><SelectIcon /><Chevron /></BigTool>
        <ToolGrid $cols="24px 72px">
          <CropIcon />
          <SplitTool $gap={8}><RotateIcon /><Chevron /></SplitTool>
          <ResizeIcon />
          <SplitTool $gap={8}><FlipIcon /><Chevron /></SplitTool>
        </ToolGrid>
      </GroupBody>
      <GroupLabel>Image</GroupLabel>
    </Group>
    <Group $w={137}>
      <GroupBody $pad={8}>
        <ToolGrid $cols="40px 40px 40px">
          <PencilIcon /><BucketIcon /><LetterIcon /><EraserIcon /><DropperIcon /><ZoomIcon />
        </ToolGrid>
      </GroupBody>
      <GroupLabel>Outils</GroupLabel>
    </Group>
    <Group $w={73}>
      <GroupBody $center><BigTool $w={40}><BrushIcon /><Chevron /></BigTool></GroupBody>
      <GroupLabel>Pinceaux</GroupLabel>
    </Group>
    <Group $w={277}>
      <GroupBody $pad={12}>
        <ShapeBox>
          {shapes.map((s, i) => (
            <ShapeCell key={i} $on={i === 2}><Svg w={15} box="0 0 16 16">{s}</Svg></ShapeCell>
          ))}
        </ShapeBox>
        <ToolGrid $cols="39px">
          <SplitTool $gap={7}><OutlineIcon /><Chevron /></SplitTool>
          <SplitTool $gap={7}><FillIcon /><Chevron /></SplitTool>
        </ToolGrid>
      </GroupBody>
      <GroupLabel>Formes</GroupLabel>
    </Group>
    <Group $w={57}>
      <GroupBody $center><BigTool $w={40}><StrokeSizeIcon /><Chevron /></BigTool></GroupBody>
      <GroupLabel $pad={1}>Taille</GroupLabel>
    </Group>
    <Group $w={376} $last>
      <GroupBody $pad={21}>
        <ActiveColors><Primary /><Secondary /></ActiveColors>
        <Palette>{palette.map(([c, r], i) => <Swatch key={i} $c={c} $ring={r} />)}</Palette>
        <WheelWrap>
          <WheelPlus><Svg w={12} stroke="#555" sw={1}><circle cx="6" cy="6" r="5.400" fill="#fff" /><path d="M6 3v6M3 6h6" stroke="#777" /></Svg></WheelPlus>
        </WheelWrap>
      </GroupBody>
      <GroupLabel>Couleurs</GroupLabel>
    </Group>
  </Ribbon>
);

const WebPage = () => (
  <>
    <TopStrip><GreenStub /></TopStrip>
    <PageRow>
      <SideNav>
        <SideButton />
        <SideSection $h={39}><SideChevron><BlueChevron /></SideChevron></SideSection>
        <SideSection $h={94}><SideText>0</SideText><SideChevron><BlueChevron /></SideChevron></SideSection>
        <SideSection $h={94}><SideChevron><BlueChevron /></SideChevron></SideSection>
        <SideFoot>
          <SideCut>:</SideCut>
          <SideWord>GIQUE</SideWord>
          <SideIcon $top={57}><FaPhone size={11} /></SideIcon>
          <SideIcon $top={15}><FaBook size={12} /></SideIcon>
        </SideFoot>
      </SideNav>
      <Main>
        <SearchBar><SearchButton><FaSearch size={11} /></SearchButton><SearchHint>Recherche...</SearchHint></SearchBar>
        <Tabs><Tab>Gestion des Element de Donnée</Tab><Tab $active>Gestion des Indicateurs</Tab></Tabs>
        <Crumb>AXE STRATEGIQUE : 1 : LEADERSHIP ET GOUVERNANCE &gt;</Crumb>
        <Section>
          <Heading>SOUS AXE STRATEGIQUE : 1.1-Coordination des activités de la santé numérique.</Heading>
          <Goal>Objectifs : OBJECTIF SPECIFIQUE 1.1 : D´ici 2021, mettre en place un comité national pour la supervision et la coordination des activités de la santé numérique.</Goal>
          <AddLink>+ Nouvel Indicateur</AddLink>
          <ListTitle>Liste des Indicateurs</ListTitle>
          <TableRow $h={35}>{headers.map(([t, c]) => <HeadCell key={t} $c={c}>{t}</HeadCell>)}</TableRow>
          <TableRow $h={51}>
            <Cell>1.1.1-Nombre de comités mis en<br />place-Achev(%)</Cell>
            <Cell>
              <Variables>
                <Variable>1.1.1-Nombre de comités mis en place(Réalisation)</Variable>
                <Variable>1.1.2-Nombre de comités mis en place(réalisation)</Variable>
              </Variables>
            </Cell>
            <Cell $c="#17a2b8"><FileLink><FaFile size={12} />Fiche d'Indicateur</FileLink></Cell>
            <Cell>None</Cell>
            <Cell />
            <Cell>$32$/$33$*100</Cell>
            <Cell />
            <Cell>
              <Buttons>
                <IconButton $w={30} $bg="#28a745"><FaPen size={11} /></IconButton>
                <IconButton $w={28} $bg="#dc3545"><FaTrash size={11} /></IconButton>
              </Buttons>
            </Cell>
          </TableRow>
          <ChartBlock>
            <ChartCaption>Courbe de Progression</ChartCaption>
            <ChartTitle>Atteinte des Objectifs</ChartTitle>
            <Legend>
              <LegendKey $c="#00f" />Atteinte des Objetifs
              <LegendKey $c="#f00" $ml={6.5} />Cibles
            </Legend>
            <Chart />
          </ChartBlock>
        </Section>
      </Main>
      <PageScroll><ScrollArrow /><ScrollThumb /></PageScroll>
    </PageRow>
    <LogoCard><AlimaLogo /><CardFooter><FooterMark /></CardFooter></LogoCard>
    <Annotation width="258" height="270" viewBox="0 0 258 270">
      <ellipse cx="128.700" cy="135" rx="125.500" ry="130.500" fill="none" stroke="#e81c26" strokeWidth="5" />
    </Annotation>
  </>
);

export default function App() {
  return (
    <Window>
      <Global />
      <Header>
        <TitleBar>
          <PaintLogo size={16} />
          <Title>Sans titre - Paint</Title>
          <WindowControls>
            <Svg w={12} h={12} stroke="#111"><path d="M1 6.500h10" /></Svg>
            <Svg w={12} h={12} stroke="#111"><rect x="1" y="3" width="8" height="8" rx="1" /><path d="M3.500 1H9a2 2 0 0 1 2 2v5.500" /></Svg>
            <Svg w={12} h={12} stroke="#111"><path d="m1 1 10 10M11 1 1 11" /></Svg>
          </WindowControls>
        </TitleBar>
        <MenuBar>
          <MenuItem $gap={29} $track="-0.200px">Fichier</MenuItem>
          <MenuItem $gap={17}>Affichage</MenuItem>
          <MenuDivider />
          <MenuTool $w={45}>
            <Svg w={16} stroke="#333"><path d="M1 2.500A1.500 1.500 0 0 1 2.500 1H12l3 3v9.500a1.500 1.500 0 0 1-1.500 1.500h-11A1.500 1.500 0 0 1 1 13.500zM4 1v4h7V1M3.500 15V9h9v6" /></Svg>
          </MenuTool>
          <MenuDivider />
          <MenuTool $w={45}>
            <Svg w={15} h={17}><path d="M1.500 1.500V7H7M1.800 6.800C4 2 9 .5 12 3s2.500 5 0 7.500L5.500 16" /></Svg>
          </MenuTool>
          <MenuTool $w={34}>
            <Svg w={15} h={17} stroke="#b2b7bb"><path d="M13.500 1.500V7H8M13.200 6.800C11 2 6 .5 3 3s-2.500 5 0 7.500L9.500 16" /></Svg>
          </MenuTool>
          <Feedback>
            <Svg w={18} h={17}><circle cx="6" cy="6.500" r="2.700" /><path d="M2.500 11h7a1.200 1.200 0 0 1 1.200 1.300C10.500 15 8.500 16 6 16s-4.500-1-4.700-3.700A1.200 1.200 0 0 1 2.500 11zM9.500 1h7v5h-4l-2 1.800V6h-1z" /></Svg>
          </Feedback>
        </MenuBar>
      </Header>
      <RibbonBar />
      <Workspace>
        <CanvasHolder><Canvas><WebPage /></Canvas></CanvasHolder>
        <VerticalTrack><VerticalThumb /></VerticalTrack>
      </Workspace>
      <HorizontalTrack><HorizontalThumb /></HorizontalTrack>
      <StatusBar>
        <StatusCell $w={139} $pad={17} $gap={8} $track={-0.25} $line>
          <Svg w={10} h={13}><path d="M1.500 1v10.500L4.500 9H9z" /></Svg><StatusText>1366, 193px</StatusText>
        </StatusCell>
        <StatusCell $w={136} $pad={12} $line><SelectIcon s={14} d="2.500 1.500" /></StatusCell>
        <StatusCell $w={200} $pad={13} $gap={8}>
          <Svg w={12} h={13}><path d="M2 .5v12M10 .5v12M.5 2h11M.5 11h11" /></Svg><StatusText>1600 × 900px</StatusText>
        </StatusCell>
        <ZoomArea>
          <ZoomValue>100 %</ZoomValue>
          <Svg w={12} h={12} stroke="#111"><path d="M.5 5.500h11" /></Svg>
          <Track><Knob /></Track>
          <Svg w={12} h={12} stroke="#111"><path d="M.5 5.500h11M6 .5v11" /></Svg>
        </ZoomArea>
      </StatusBar>
      <Taskbar>
        <Weather><WeatherIcon /><Lines>27°C<Muted>Eclaircies</Muted></Lines></Weather>
        {apps.map(([name, w]) => {
          const on = name === 'paint';
          return (
            <AppButton key={name} $on={on}>
              {appIcons[name]}
              {w > 0 && <Indicator $w={w} $on={on} />}
              {name === 'whatsapp' && <AppBadge>4</AppBadge>}
            </AppButton>
          );
        })}
        <Tray>
          <TrayIcon $mr={8}><Svg w={12} h={8} sw={1.3}><path d="M1 7 6 1.500 11 7" /></Svg></TrayIcon>
          <TrayIcon $mr={15}>
            <Svg w={17} h={15} stroke="none"><path d="M4 11a3.500 3.500 0 0 1 0-6C5 1 10 0 12 4c3 0 4 2 4 4L8 11z" fill="#d4d4d4" stroke="#555" /><path d="M2 10C5 5 9 3 13 4" stroke="#555" /><circle cx="12" cy="10" r="4.500" fill="#dd2b32" /><path d="m10.300 8.300 3.400 3.400M13.700 8.300l-3.400 3.400" stroke="#fff" /></Svg>
          </TrayIcon>
          <Lines $align="center" $mr={20}>FRA<br />FR</Lines>
          <TrayIcon $mr={8}>
            <Svg w={16} h={13} sw={1.2}><path d="M1 4.500c4-4.500 10-4.500 14 0M3.500 7c3-3 6-3 9 0M5.700 9.300c1.500-1.500 3.100-1.500 4.600 0" /><circle cx="8" cy="11.300" r="1" fill="#222" /></Svg>
          </TrayIcon>
          <TrayIcon $mr={7}>
            <Svg w={17} h={14}><path d="M1 5v4h2.500L7.500 12.500v-11L3.500 5zM10 5c1 1.200 1 2.800 0 4M12.200 3c2 2.300 2 5.700 0 8M14.400 1.300c2.200 3.500 2.200 8 0 11.400" /></Svg>
          </TrayIcon>
          <TrayIcon $mr={17}>
            <Svg w={17} h={13} sw={1.2}><path d="M6.500 3H13a1 1 0 0 1 1 1v7a1 1 0 0 1-1 1H3a1 1 0 0 1-1-1V8M15.700 6v3" /><path d="M7 4.800h5.200v5.400H4.500z" fill="#222" stroke="none" /><path d="M4 .5 1.500 5H4L3 8.500 6.500 3.500H4.300L5.500.5z" fill="#222" stroke="none" /></Svg>
          </TrayIcon>
          <Lines $align="right" $track={0.05} $mr={6}>23:03<br />09/03/2023</Lines>
          <CountBadge>24</CountBadge>
        </Tray>
      </Taskbar>
      <Watermark><WatermarkTitle>Activer Windows</WatermarkTitle>Accédez aux paramètres pour activer Windows.</Watermark>
    </Window>
  );
}
